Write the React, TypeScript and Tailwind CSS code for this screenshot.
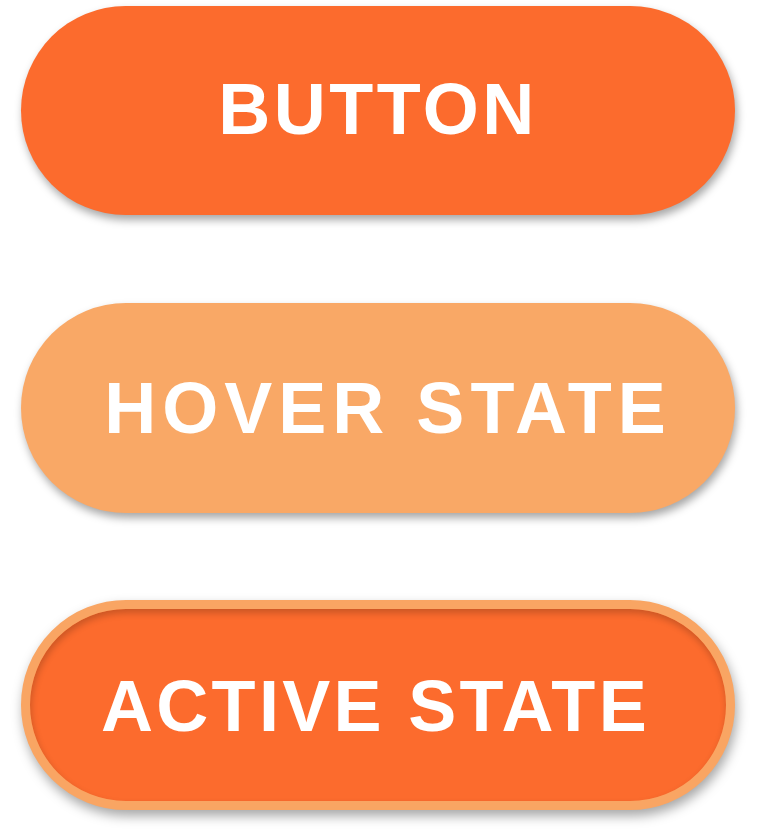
export default function App() {
  const base =
    "flex items-center justify-center w-[714px] rounded-full text-white font-bold text-[72px] leading-none font-['Liberation_Sans',Arial,sans-serif]";

  return (
    <div className="min-h-screen w-full bg-white flex flex-col gap-[88px] pl-[21px] pt-[6px]">
      {/* default */}
      <button className={`${base} h-[209px] bg-[#fc6b2d] shadow-[2px_5px_8px_rgba(0,0,0,0.35)] tracking-[3.5px]`}>
        <span className="-mt-[4px]">BUTTON</span>
      </button>

      {/* hover */}
      <button className={`${base} h-[210px] bg-[#f9a866] shadow-[2px_5px_8px_rgba(0,0,0,0.35)] tracking-[6px]`}>
        <span className="pl-[20px]">HOVER STATE</span>
      </button>

      {/* active */}
      <button className={`${base} h-[210px] -mt-[1px] border-[9px] border-[#f9a563] bg-[#fc6b2d] shadow-[2px_6px_12px_rgba(0,0,0,0.35),inset_1px_4px_7px_rgba(0,0,0,0.2)] tracking-[3.3px]`}>
        <span className="pr-[5px] mt-[2px]">ACTIVE STATE</span>
      </button>
    </div>
  );
}
